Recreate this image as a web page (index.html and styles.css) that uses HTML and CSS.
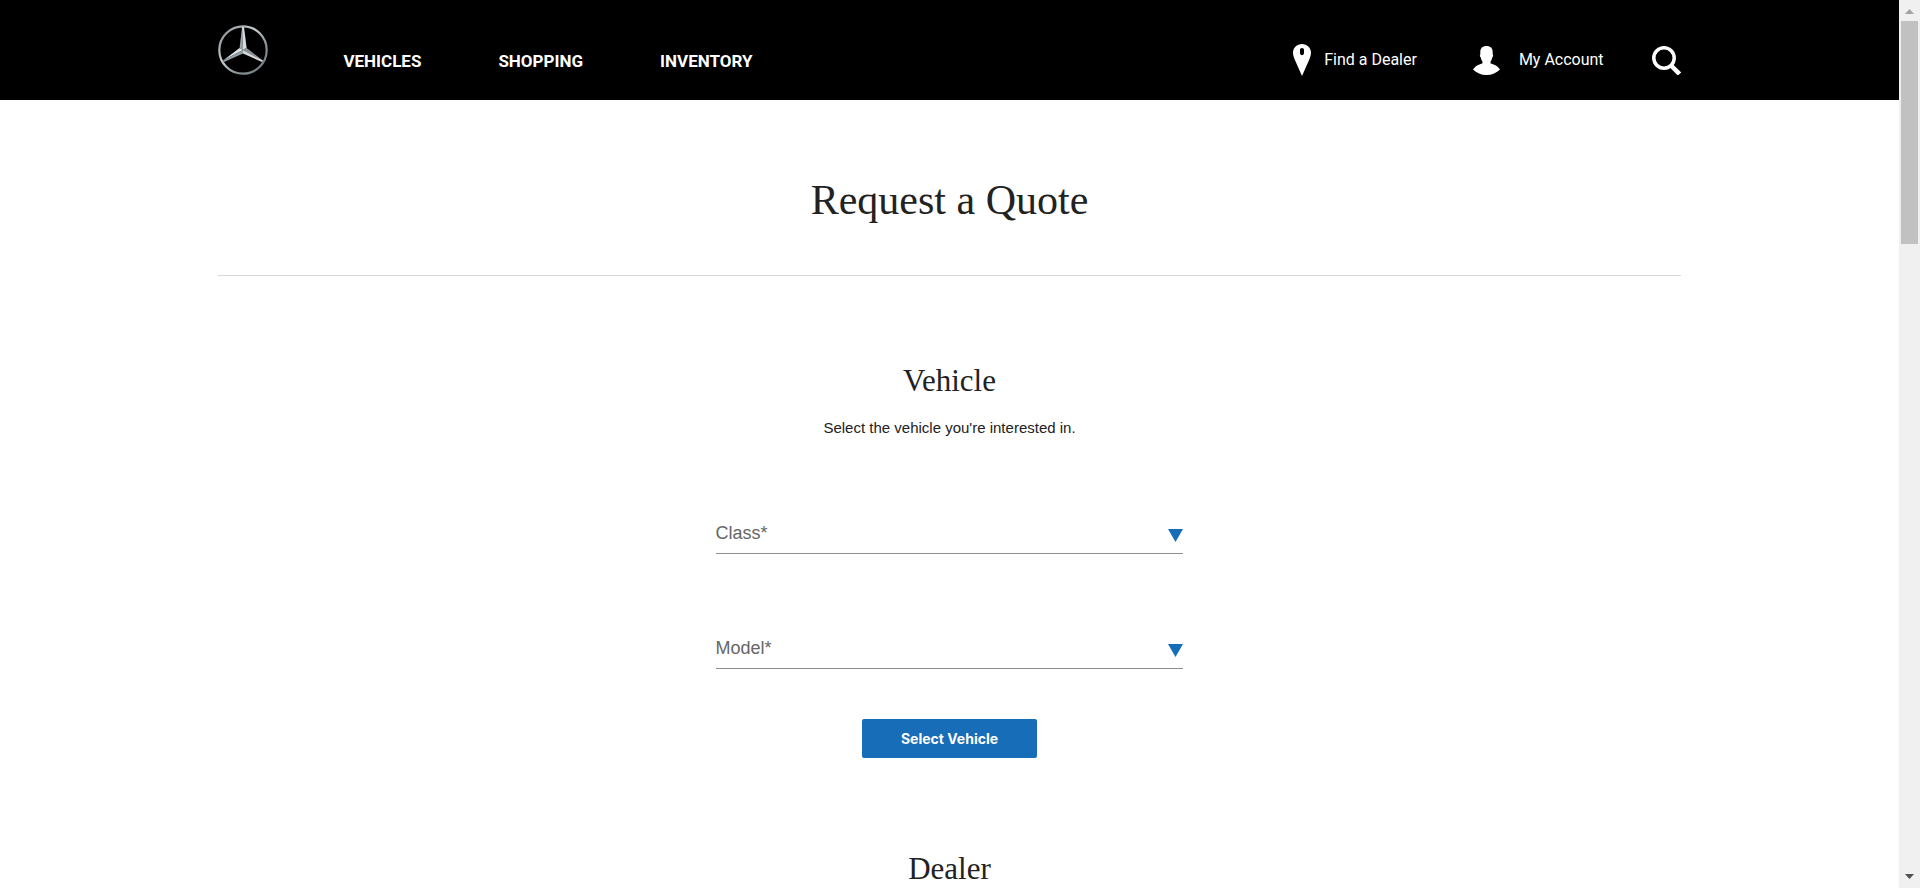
FILE: index.html
```html
<!DOCTYPE html>
<html lang="en">
<head>
<meta charset="utf-8">
<title>Request a Quote</title>
<link rel="stylesheet" href="styles.css">
</head>
<body>
<div class="page">
  <header class="header">
    <div class="header-inner">
      <a class="logo" href="#" aria-label="Home">
        <svg viewBox="0 0 50 50" width="50" height="50">
          <defs>
            <linearGradient id="ring" x1="0" y1="0" x2="1" y2="1">
              <stop offset="0" stop-color="#7d868b"/><stop offset=".4" stop-color="#c9ced0"/><stop offset=".65" stop-color="#8d979b"/><stop offset="1" stop-color="#66727a"/>
            </linearGradient>
          </defs>
          <circle cx="25" cy="25" r="23.7" fill="none" stroke="url(#ring)" stroke-width="2.200"/>
          <path d="M24 2 21.600 23 25 25z" fill="#9aa3a7"/>
          <path d="M24 2h2L28.600 23 25 25z" fill="#d6dbdd"/>
          <path d="M5 35.600 21.600 23 25 25z" fill="#dfe4e5"/>
          <path d="M5 35.600 25 25v3.400L6 37z" fill="#94a0a6"/>
          <path d="M45 35.600 28.600 23 25 25z" fill="#8b969b"/>
          <path d="M45 35.600 25 25v3.400L44 37z" fill="#d5dadc"/>
        </svg>
      </a>
      <nav class="nav">
        <a href="#">VEHICLES</a>
        <a href="#">SHOPPING</a>
        <a href="#">INVENTORY</a>
      </nav>
      <div class="tools">
        <a class="tool dealer" href="#">
          <svg viewBox="0 0 18 32" width="18" height="32"><path fill="#fff" fill-rule="evenodd" d="M9 0C4 0 0 3.800 0 8.800c0 2.200.7 4.200 1.700 6.600L9 32l7.300-16.600C17.300 13 18 11 18 8.800 18 3.800 14 0 9 0zm0 4c1.200 0 2 .9 2 2v3c0 1.200-.8 2.200-2 2.200S7 10.200 7 9V6c0-1.100.8-2 2-2z"/></svg>
          <span>Find a Dealer</span>
        </a>
        <a class="tool account" href="#">
          <svg viewBox="0 0 27 29" width="27" height="29"><path fill="#fff" d="M13.500 0C9.500 0 7.300 2.200 7.300 6v2.500c-.7.500-.5 2.200.4 2.800.3 1.700.8 3 1.700 4v2.200C6.500 18.300 2.500 19.500 0 23.500 3.500 27 8 29 13.500 29S23.500 27 27 23.500c-2.500-4-6.500-5.200-9.400-6v-2.200c.9-1 1.400-2.300 1.700-4 .9-.6 1.100-2.300.4-2.800V6c0-3.800-2.200-6-6.200-6z"/></svg>
          <span>My Account</span>
        </a>
        <button class="search" type="button" aria-label="Search">
          <svg viewBox="0 0 29 29" width="29" height="29"><g fill="none" stroke="#fff"><circle cx="12" cy="12" r="10.200" stroke-width="3.500"/><path d="M18.500 19 27.500 28" stroke-width="4.500"/></g></svg>
        </button>
      </div>
    </div>
  </header>
  <main class="content">
    <h1>Request a Quote</h1>
    <form class="form">
      <section class="section">
        <h2>Vehicle</h2>
        <p>Select the vehicle you're interested in.</p>
        <div class="field">
          <label for="class">Class*</label>
          <select id="class"><option></option></select>
          <svg class="arrow" viewBox="0 0 15 13" width="15" height="13"><path d="M0 0h15L7.500 13z" fill="#176db7"/></svg>
        </div>
        <div class="field">
          <label for="model">Model*</label>
          <select id="model"><option></option></select>
          <svg class="arrow" viewBox="0 0 15 13" width="15" height="13"><path d="M0 0h15L7.500 13z" fill="#176db7"/></svg>
        </div>
        <button class="submit" type="button">Select Vehicle</button>
      </section>
      <section class="section">
        <h2>Dealer</h2>
      </section>
    </form>
  </main>
</div>
<div class="scrollbar" aria-hidden="true">
  <svg viewBox="0 0 9 5" width="9" height="5"><path d="M0 5h9L4.500 0z" fill="#a3a3a3"/></svg>
  <div class="track"><div class="thumb"></div></div>
  <svg viewBox="0 0 9 5" width="9" height="5"><path d="M0 0h9L4.500 5z" fill="#505050"/></svg>
</div>
</body>
</html>
```
FILE: styles.css
```css
* { box-sizing: border-box; }

body {
  margin: 0;
  display: flex;
  height: 100vh;
  overflow: hidden;
  background: #fff;
  color: #222;
  font-family: "Liberation Sans", Arial, sans-serif;
}

a { color: inherit; text-decoration: none; }
svg { display: block; flex: none; }

.page { flex: 1; min-width: 0; overflow: hidden; }

.header { background: #000; color: #fff; font-family: Roboto, "Liberation Sans", sans-serif; }

.header-inner {
  width: 77%;
  height: 100px;
  margin: 0 auto;
  display: flex;
  align-items: center;
}

.nav {
  display: flex;
  gap: 77px;
  margin-left: 75px;
  padding-top: 22px;
  font-size: 17px;
  font-weight: 700;
  line-height: 20px;
}

.tools {
  display: flex;
  align-items: center;
  margin-left: auto;
  padding-top: 20px;
  font-size: 16px;
  line-height: 20px;
}

.tool { display: flex; align-items: center; }
.dealer { gap: 13px; margin-right: 56px; }
.account { gap: 19px; margin-right: 48px; }

.search { padding: 0; border: 0; background: none; }

.content { width: 77%; margin: 0 auto; text-align: center; }

h1, h2 { margin: 0; font-family: "Liberation Serif", serif; font-weight: 400; }

h1 {
  padding: 76px 0 51px;
  border-bottom: 1px solid #d8d8d8;
  font-size: 42px;
  line-height: 48px;
}

.form { display: flex; flex-direction: column; gap: 91px; padding-top: 85px; }

.section { display: flex; flex-direction: column; align-items: center; }

h2 { font-size: 31px; line-height: 40px; }

p { margin: 17px 0 38px; font-size: 15px; line-height: 20px; }

.field {
  display: grid;
  grid-template-columns: 1fr auto;
  align-items: center;
  width: 32%;
  height: 40px;
  margin-top: 38px;
  margin-bottom: 37px;
  border-bottom: 1px solid #8e8e8e;
  color: #666;
  font-size: 18px;
  text-align: left;
}

.field label { grid-area: 1 / 1; pointer-events: none; }

.field select {
  grid-area: 1 / 1 / 2 / 3;
  width: 100%;
  height: 100%;
  border: 0;
  appearance: none;
  background: transparent;
  font: inherit;
}

.arrow { grid-area: 1 / 2; margin-top: 3px; pointer-events: none; }

.submit {
  margin-top: 13px;
  padding: 0 39px;
  border: 0;
  border-radius: 2px;
  background: #176db7;
  color: #fff;
  font: 700 14px/39px Inter, "Liberation Sans", sans-serif;
}

.scrollbar {
  display: flex;
  flex-direction: column;
  align-items: center;
  width: 21px;
  padding: 9px 2px;
  background: #f0f0f0;
}

.track { flex: 1; width: 100%; padding: 7px 0; }
.thumb { height: 26.4%; background: #c1c1c1; }
```
